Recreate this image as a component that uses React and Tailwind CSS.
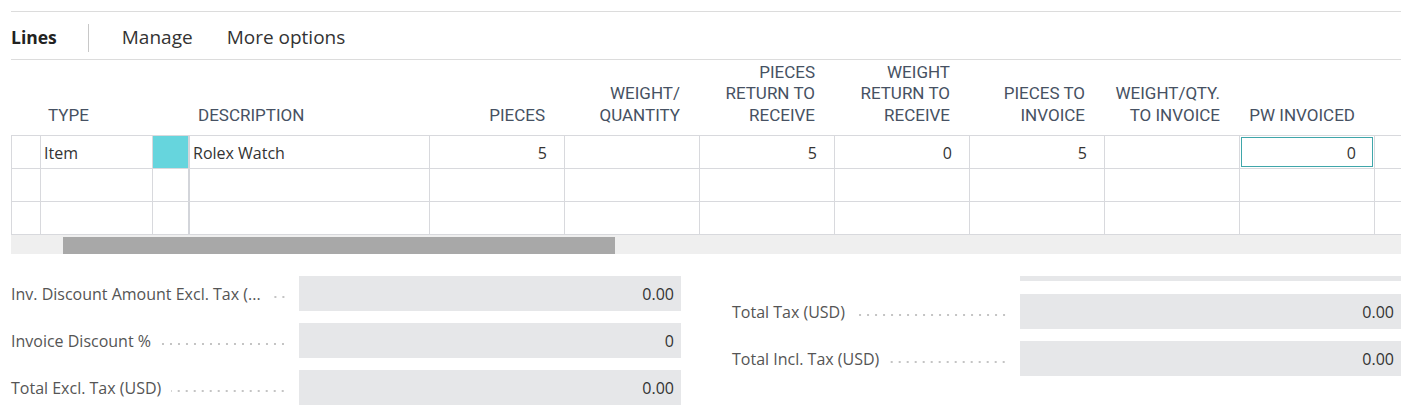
import React from 'react';

const sans = { fontFamily: '"Open Sans", "Noto Sans", sans-serif' };
const head = { fontFamily: 'Roboto, "Noto Sans", sans-serif' };

const numCols = [
  ['PIECES'],
  ['WEIGHT/', 'QUANTITY'],
  ['PIECES', 'RETURN TO', 'RECEIVE'],
  ['WEIGHT', 'RETURN TO', 'RECEIVE'],
  ['PIECES TO', 'INVOICE'],
  ['WEIGHT/QTY.', 'TO INVOICE'],
  ['PW INVOICED'],
];

const rows = [
  { type: 'Item', desc: 'Rolex Watch', vals: ['5', '', '5', '0', '5', '', '0'], filled: true },
  { type: '', desc: '', vals: ['', '', '', '', '', '', ''] },
  { type: '', desc: '', vals: ['', '', '', '', '', '', ''] },
];

const gridCols = 'grid grid-cols-[30px_112px_35px_2px_240px_repeat(7,135px)_26px]';

const Leader = () => (
  <span className="flex-1 min-w-[14px] h-[4px] mt-[6px] bg-[radial-gradient(circle,#c4c4c4_0.9px,transparent_1.2px)] bg-[length:8px_4px] bg-repeat-x bg-right" />
);

const TotalRow = ({ label, value }) => (
  <div className="flex items-center h-[35px]">
    <div className="w-[288px] flex items-center pr-[12px] text-[16px] text-[#555]">
      <span className="whitespace-nowrap pr-[10px]">{label}</span>
      <Leader />
    </div>
    <div className="flex-1 h-full bg-[#e6e7e9] flex items-center justify-end pr-[7px] text-[16px] text-[#333]">
      {value}
    </div>
  </div>
);

export default function App() {
  return (
    <div className="bg-white w-[1411px] h-[409px] overflow-hidden pt-[11px] pl-[11px] pr-[10px]" style={sans}>
      <div className="border-t border-[#dcdcdc]">
        <div className="flex items-center h-[48px] pt-[4px] border-b border-[#dcdcdc] text-[19px] text-[#333]">
          <span className="font-bold text-[17.5px] text-[#222]">Lines</span>
          <span className="w-px h-[28px] bg-[#c8c8c8] ml-[31px] mr-[33px]" />
          <span>Manage</span>
          <span className="ml-[34px]">More options</span>
        </div>

        <div className={`${gridCols} h-[75px] items-end pb-[9px] text-[17px] leading-[21.5px] font-normal text-[#465162]`} style={head}>
          <div />
          <div className="pl-[7px]">TYPE</div>
          <div />
          <div />
          <div className="pl-[8px]">DESCRIPTION</div>
          {numCols.map((lines, i) => (
            <div key={i} className="text-right pr-[20px]">
              {lines.map((l) => (
                <div key={l}>{l}</div>
              ))}
            </div>
          ))}
          <div />
        </div>

        <div className="border-t border-l border-[#d8d9dd]">
          {rows.map((r, ri) => (
            <div key={ri} className={`${gridCols} -ml-px h-[33px] border-b border-[#d8d9dd] text-[16px] text-[#333]`}>
              <div className="border-l border-r border-[#d8d9dd]" />
              <div className="border-r border-[#d8d9dd] flex items-center pl-[3px] pt-[2px]">{r.type}</div>
              <div className={r.filled ? 'bg-[#66d5dd]' : ''} />
              <div className="bg-[#d3d5da]" />
              <div className="border-r border-[#d8d9dd] flex items-center pl-[3px] pt-[2px]">{r.desc}</div>
              {r.vals.map((v, i) => (
                <div key={i} className="border-r border-[#d8d9dd] p-px">
                  <div
                    className={`h-full flex items-center justify-end pr-[16px] pt-[2px] ${
                      r.filled && i === 6 ? 'border border-[#3fa6aa]' : ''
                    }`}
                  >
                    {v}
                  </div>
                </div>
              ))}
              <div />
            </div>
          ))}
        </div>

        <div className="h-[19px] bg-[#efefef] pt-[2px]">
          <div className="ml-[52px] w-[552px] h-full bg-[#a8a8a8]" />
        </div>

        <div className="flex gap-[51px] pt-[22px]">
          <div className="w-[670px] flex flex-col gap-[12px]">
            <TotalRow label="Inv. Discount Amount Excl. Tax (..." value="0.00" />
            <TotalRow label="Invoice Discount %" value="0" />
            <TotalRow label="Total Excl. Tax (USD)" value="0.00" />
          </div>
          <div className="flex-1 flex flex-col">
            <div className="flex">
              <div className="w-[288px]" />
              <div className="flex-1 h-[5px] bg-[#e6e7e9]" />
            </div>
            <div className="flex flex-col gap-[12px] mt-[13px]">
              <TotalRow label="Total Tax (USD)" value="0.00" />
              <TotalRow label="Total Incl. Tax (USD)" value="0.00" />
            </div>
          </div>
        </div>
      </div>
    </div>
  );
}
